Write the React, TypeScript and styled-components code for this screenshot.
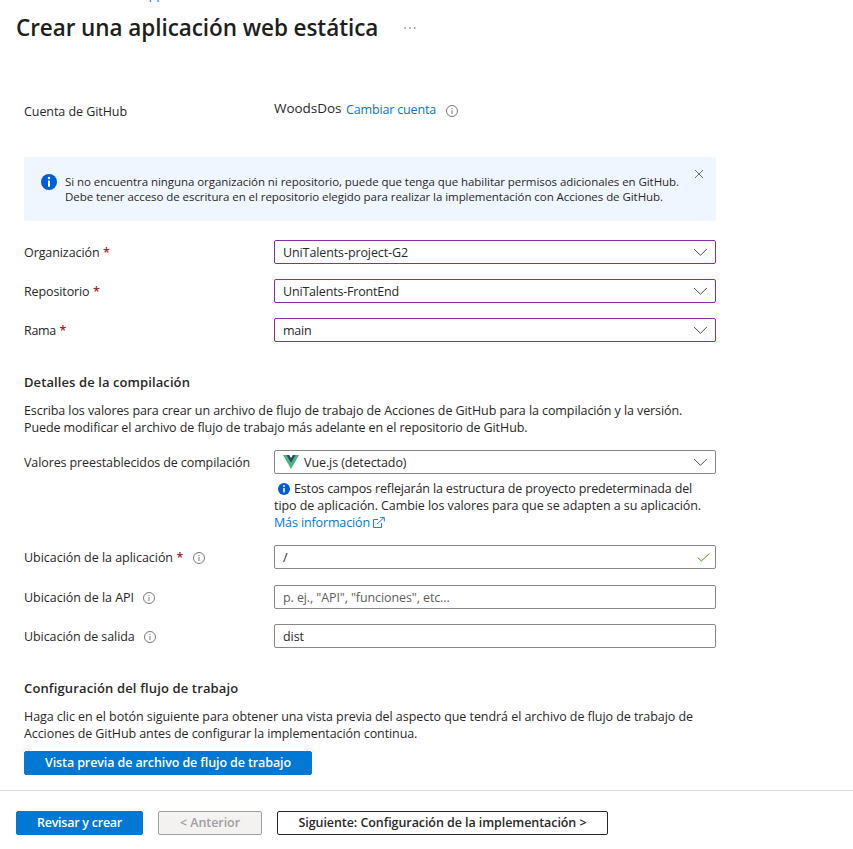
import React from "react";
import styled, { createGlobalStyle } from "styled-components";

const GlobalStyle = createGlobalStyle`
  * { box-sizing: border-box; }
  body {
    margin: 0;
    background: #fff;
    color: #292827;
    font: 12.5px/17px "Open Sans", "Noto Sans", sans-serif;
  }
`;

type Spaced = { $ls?: number };

const Page = styled.div`
  width: 853px;
  height: 849px;
  overflow: hidden;
  display: flex;
  flex-direction: column;
`;

const Crumb = styled.div`
  height: 2px;
  padding-left: 141px;
  overflow: hidden;
  color: #0078d4;
  display: flex;
  align-items: flex-end;
  line-height: 14px;
`;

const CrumbLink = styled.span`
  letter-spacing: -0.2px;
  margin-bottom: -1px;
`;

const Header = styled.header`
  display: flex;
  align-items: center;
  height: 32px;
  margin-top: 10px;
  padding-left: 16px;
`;

const Title = styled.h1`
  margin: 0;
  width: 388px;
  font-size: 22.5px;
  line-height: 32px;
  font-weight: 600;
  letter-spacing: -0.07px;
  white-space: nowrap;
  color: #201f1e;
`;

const Content = styled.main`
  width: 716px;
  height: 746px;
  padding: 55px 0 0 24px;
  display: flex;
  flex-direction: column;
`;

const Row = styled.div<{ $gap?: number }>`
  display: flex;
  align-items: center;
  height: 24px;
  margin-top: ${(p) => p.$gap ?? 15}px;
`;

const Label = styled.label<Spaced>`
  width: 250px;
  flex: none;
  display: flex;
  align-items: center;
  white-space: nowrap;
  letter-spacing: ${(p) => p.$ls ?? -0.08}px;
  svg { margin: 1px 0 0 9.4px; }
`;

const Required = styled.span`
  color: #a4262c;
  font-weight: 600;
  margin-left: 3.5px;
  letter-spacing: 0;
`;

const Field = styled.div<{ $tone?: "edited" }>`
  flex: 1;
  height: 24px;
  display: flex;
  align-items: center;
  padding: 0 8px;
  border: 1px solid ${(p) => (p.$tone === "edited" ? "#8a2da5" : "#8a8886")};
  border-radius: 2px;
  background: #fff;
`;

const Value = styled.span<Spaced & { $muted?: boolean }>`
  flex: 1;
  white-space: nowrap;
  letter-spacing: ${(p) => p.$ls ?? -0.08}px;
  color: ${(p) => (p.$muted ? "#605e5c" : "inherit")};
`;

const Account = styled.div`
  display: flex;
  align-items: center;
  height: 24px;
`;

const UserName = styled.span`
  font-size: 13.5px;
  letter-spacing: -0.03px;
  width: 72px;
  margin-top: -6px;
`;

const Link = styled.a<Spaced>`
  color: #0078d4;
  letter-spacing: ${(p) => p.$ls ?? 0}px;
`;

const AccountLink = styled(Link)`
  margin: -4px 10px 0 0;
`;

const Banner = styled.section`
  display: flex;
  align-items: flex-start;
  height: 64px;
  margin-top: 34px;
  padding: 17px 11px 0 17px;
  border-radius: 2px;
  background: #f0f6ff;
  & > svg { flex: none; }
`;

const BannerText = styled.div`
  flex: 1;
  margin-left: 8px;
  font-size: 11.5px;
  line-height: 15px;
`;

const Line = styled.div<Spaced>`
  white-space: nowrap;
  letter-spacing: ${(p) => p.$ls ?? 0}px;
`;

const CloseIcon = styled.svg`
  margin-top: -5px;
`;

const SectionTitle = styled.h2<{ $gap: number; $ls: number }>`
  margin: ${(p) => p.$gap}px 0 0;
  font-size: 13px;
  line-height: 18px;
  font-weight: 600;
  letter-spacing: ${(p) => p.$ls}px;
`;

const Paragraph = styled.div`
  margin-top: 11px;
`;

const Helper = styled.div`
  margin: 6px 0 0 250px;
`;

const HelperLine = styled(Line)`
  display: flex;
  align-items: center;
  height: 17px;
`;

const InlineInfo = styled.span`
  display: flex;
  margin: 1px 4px 0 4px;
`;

const ExternalIcon = styled.svg`
  margin: -1px 0 0 3px;
`;

const Button = styled.button<{ $kind: "primary" | "secondary" | "disabled"; $width: number; $ls: number }>`
  width: ${(p) => p.$width}px;
  height: 24px;
  flex: none;
  padding: 0 0 1px;
  border-radius: 2px;
  border: 1px solid ${(p) => ({ primary: "#0078d4", secondary: "#292827", disabled: "#a19f9d" })[p.$kind]};
  background: ${(p) => ({ primary: "#0078d4", secondary: "#fff", disabled: "#f3f2f1" })[p.$kind]};
  color: ${(p) => ({ primary: "#fff", secondary: "#292827", disabled: "#a19f9d" })[p.$kind]};
  font: 600 12.5px/20px "Open Sans", "Noto Sans", sans-serif;
  letter-spacing: ${(p) => p.$ls}px;
  white-space: nowrap;
`;

const PreviewButton = styled(Button)`
  margin-top: 9px;
`;

const Footer = styled.footer`
  display: flex;
  gap: 15px;
  height: 59px;
  padding: 20px 16px 0;
  border-top: 1px solid #d9d9d9;
`;

const InfoOutline = () => (
  <svg width="12" height="12" viewBox="0 0 12 12" fill="none">
    <circle cx="6" cy="6" r="5.5" stroke="#6b6967" strokeWidth="0.9" />
    <path d="M6 5v4M6 3v1" stroke="#7d7b79" strokeWidth="1" />
  </svg>
);

const InfoSolid = ({ size }: { size: number }) => (
  <svg width={size} height={size} viewBox="0 0 16 16">
    <circle cx="8" cy="8" r="8" fill="#015cda" />
    <circle cx="8" cy="4" r="1.25" fill="#fff" />
    <path d="M8 6.5v6.3" stroke="#fff" strokeWidth="2" />
  </svg>
);

const Chevron = () => (
  <svg width="14" height="8" viewBox="0 0 14 8" fill="none">
    <path d="M1 1L7.5 7.3L13.8 1" stroke="#484644" strokeWidth="0.95" />
  </svg>
);

const VueLogo = styled.svg`
  flex: none;
  margin: -1px 5px 0 0;
`;

const Check = () => (
  <svg width="13" height="9" viewBox="0 0 13 9" fill="none">
    <path d="M0.6 4.5L4.3 8L12.4 0.6" stroke="#57a300" strokeWidth="1" />
  </svg>
);

const CheckSlot = styled.span`
  display: flex;
  margin-right: -3px;
`;

const Dots = () => (
  <svg width="12" height="2" viewBox="0 0 12 2" fill="#797775">
    <rect x="0.4" y="0.3" width="1.4" height="1.4" />
    <rect x="5.2" y="0.3" width="1.4" height="1.4" />
    <rect x="10" y="0.3" width="1.4" height="1.4" />
  </svg>
);

const sources = [
  { label: "Organización", value: "UniTalents-project-G2", ls: -0.086, vls: -0.105, gap: 19 },
  { label: "Repositorio", value: "UniTalents-FrontEnd", ls: -0.116, vls: -0.185, gap: 15 },
  { label: "Rama", value: "main", ls: -0.29, vls: -0.2, gap: 15 },
];

export default function App() {
  return (
    <Page>
      <GlobalStyle />
      <Crumb><CrumbLink>App</CrumbLink></Crumb>
      <Header>
        <Title>Crear una aplicación web estática</Title>
        <Dots />
      </Header>
      <Content>
        <Row $gap={0}>
          <Label $ls={-0.064}>Cuenta de GitHub</Label>
          <Account>
            <UserName>WoodsDos</UserName>
            <AccountLink $ls={-0.161}>Cambiar cuenta</AccountLink>
            <InfoOutline />
          </Account>
        </Row>
        <Banner>
          <InfoSolid size={16} />
          <BannerText>
            <Line $ls={-0.058}>Si no encuentra ninguna organización ni repositorio, puede que tenga que habilitar permisos adicionales en GitHub.</Line>
            <Line $ls={-0.057}>Debe tener acceso de escritura en el repositorio elegido para realizar la implementación con Acciones de GitHub.</Line>
          </BannerText>
          <CloseIcon width="12" height="10" viewBox="0 0 12 10" fill="none">
            <path d="M2 1l8 8M10 1l-8 8" stroke="#605e5c" strokeWidth="0.9" />
          </CloseIcon>
        </Banner>
        {sources.map((s) => (
          <Row key={s.label} $gap={s.gap}>
            <Label $ls={s.ls}>{s.label}<Required>*</Required></Label>
            <Field $tone="edited"><Value $ls={s.vls}>{s.value}</Value><Chevron /></Field>
          </Row>
        ))}
        <SectionTitle $gap={31} $ls={0.092}>Detalles de la compilación</SectionTitle>
        <Paragraph>
          <Line $ls={-0.083}>Escriba los valores para crear un archivo de flujo de trabajo de Acciones de GitHub para la compilación y la versión.</Line>
          <Line $ls={-0.083}>Puede modificar el archivo de flujo de trabajo más adelante en el repositorio de GitHub.</Line>
        </Paragraph>
        <Row $gap={14}>
          <Label $ls={-0.109}>Valores preestablecidos de compilación</Label>
          <Field>
            <VueLogo width="16" height="14" viewBox="0 0 16 14">
              <path d="M0 0h3.2L8 8.3L12.8 0H16L8 14z" fill="#41b883" />
              <path d="M3.2 0h3L8 3.1L9.8 0h3L8 8.3z" fill="#34495e" />
            </VueLogo>
            <Value $ls={-0.076}>Vue.js (detectado)</Value>
            <Chevron />
          </Field>
        </Row>
        <Helper>
          <HelperLine $ls={-0.15}>
            <InlineInfo><InfoSolid size={12} /></InlineInfo>
            Estos campos reflejarán la estructura de proyecto predeterminada del
          </HelperLine>
          <HelperLine $ls={-0.08}>tipo de aplicación. Cambie los valores para que se adapten a su aplicación.</HelperLine>
          <HelperLine>
            <Link $ls={-0.127}>Más información</Link>
            <ExternalIcon width="12" height="11" viewBox="0 0 12 11" fill="none" stroke="#0078d4" strokeWidth="0.9">
              <path d="M5 2.5H0.5V10.5H8.5V6" />
              <path d="M4 7L11 0.6M7.2 0.5H11.3V4.5" />
            </ExternalIcon>
          </HelperLine>
        </Helper>
        <Row $gap={14}>
          <Label $ls={-0.033}>Ubicación de la aplicación<Required>*</Required><InfoOutline /></Label>
          <Field><Value>/</Value><CheckSlot><Check /></CheckSlot></Field>
        </Row>
        <Row $gap={16}>
          <Label $ls={-0.032}>Ubicación de la API<InfoOutline /></Label>
          <Field><Value $muted $ls={-0.1}>p. ej., "API", "funciones", etc...</Value></Field>
        </Row>
        <Row>
          <Label $ls={-0.075}>Ubicación de salida<InfoOutline /></Label>
          <Field><Value>dist</Value></Field>
        </Row>
        <SectionTitle $gap={31} $ls={0.14}>Configuración del flujo de trabajo</SectionTitle>
        <Paragraph>
          <Line $ls={-0.059}>Haga clic en el botón siguiente para obtener una vista previa del aspecto que tendrá el archivo de flujo de trabajo de</Line>
          <Line $ls={-0.085}>Acciones de GitHub antes de configurar la implementación continua.</Line>
        </Paragraph>
        <PreviewButton $kind="primary" $width={288} $ls={-0.103}>Vista previa de archivo de flujo de trabajo</PreviewButton>
      </Content>
      <Footer>
        <Button $kind="primary" $width={127} $ls={-0.248}>Revisar y crear</Button>
        <Button $kind="disabled" $width={104} $ls={-0.066} disabled>&lt; Anterior</Button>
        <Button $kind="secondary" $width={331} $ls={-0.068}>Siguiente: Configuración de la implementación &gt;</Button>
      </Footer>
    </Page>
  );
}
